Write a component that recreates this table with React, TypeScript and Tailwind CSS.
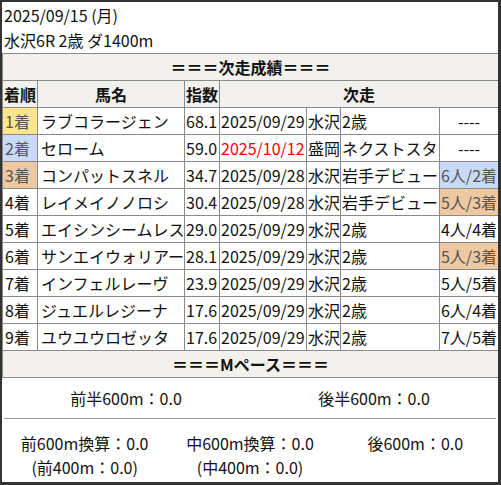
type Row = {
  rank: string;
  rankBg?: string;
  name: string;
  index: string;
  date: string;
  dateRed?: boolean;
  venue: string;
  race: string;
  result: string;
  resultBg?: string;
};

const rows: Row[] = [
  { rank: '1着', rankBg: 'bg-[#fce68d]', name: 'ラブコラージェン', index: '68.1', date: '2025/09/29', venue: '水沢', race: '2歳', result: '----' },
  { rank: '2着', rankBg: 'bg-[#c9daf8]', name: 'セローム', index: '59.0', date: '2025/10/12', dateRed: true, venue: '盛岡', race: 'ネクストスタ', result: '----' },
  { rank: '3着', rankBg: 'bg-[#edc8a0]', name: 'コンパットスネル', index: '34.7', date: '2025/09/28', venue: '水沢', race: '岩手デビュー', result: '6人/2着', resultBg: 'bg-[#c9daf8]' },
  { rank: '4着', name: 'レイメイノノロシ', index: '30.4', date: '2025/09/28', venue: '水沢', race: '岩手デビュー', result: '5人/3着', resultBg: 'bg-[#edc8a0]' },
  { rank: '5着', name: 'エイシンシームレス', index: '29.0', date: '2025/09/29', venue: '水沢', race: '2歳', result: '4人/4着' },
  { rank: '6着', name: 'サンエイウォリアー', index: '28.1', date: '2025/09/29', venue: '水沢', race: '2歳', result: '5人/3着', resultBg: 'bg-[#edc8a0]' },
  { rank: '7着', name: 'インフェルレーヴ', index: '23.9', date: '2025/09/29', venue: '水沢', race: '2歳', result: '5人/5着' },
  { rank: '8着', name: 'ジュエルレジーナ', index: '17.6', date: '2025/09/29', venue: '水沢', race: '2歳', result: '6人/4着' },
  { rank: '9着', name: 'ユウユウロゼッタ', index: '17.6', date: '2025/09/29', venue: '水沢', race: '2歳', result: '7人/5着' },
];

const cell = 'border border-[#8a8a8a] h-[27px] p-0 whitespace-nowrap overflow-hidden';

export default function App() {
  return (
    <div
      className="w-[501px] h-[485px] bg-white text-[16px] leading-[25px] text-[#111] border-l-2 border-t-2 border-r-[3px] border-b-[3px] border-[#333] overflow-hidden"
      style={{ fontFamily: '"Noto Sans CJK JP", "Noto Sans", sans-serif' }}
    >
      {/* Race title */}
      <div className="h-[51px] pl-[2px] pt-[1px]">
        <div>2025/09/15 (月)</div>
        <div>水沢6R 2歳 ダ1400m</div>
      </div>

      {/* Next race results */}
      <table className="w-[496px] table-fixed border-collapse">
        <colgroup>
          <col className="w-[35px]" />
          <col className="w-[147px]" />
          <col className="w-[35px]" />
          <col className="w-[87px]" />
          <col className="w-[34px]" />
          <col className="w-[99px]" />
          <col className="w-[59px]" />
        </colgroup>
        <tbody>
          <tr>
            <td colSpan={7} className={`${cell} bg-[#f2f1ed] text-center font-bold`}>
              ＝＝＝次走成績＝＝＝
            </td>
          </tr>
          <tr className="font-bold bg-[#f2f1ed]">
            <td className={`${cell} pl-[1px]`}>着順</td>
            <td className={`${cell} text-center`}>馬名</td>
            <td className={`${cell} pl-[1px]`}>指数</td>
            <td colSpan={4} className={`${cell} text-center`}>次走</td>
          </tr>
          {rows.map((r) => (
            <tr key={r.rank}>
              <td className={`${cell} pl-[2px] ${r.rankBg ? `${r.rankBg} text-[#555]` : ''}`}>{r.rank}</td>
              <td className={`${cell} pl-[3px]`}>{r.name}</td>
              <td className={`${cell} pl-[1px]`}>{r.index}</td>
              <td className={`${cell} pl-[1px] ${r.dateRed ? 'text-[#ff0000]' : ''}`}>{r.date}</td>
              <td className={`${cell} pl-[1px]`}>{r.venue}</td>
              <td className={`${cell} pl-[1px]`}>{r.race}</td>
              <td className={`${cell} text-center ${r.resultBg ? `${r.resultBg} text-[#555]` : ''}`}>{r.result}</td>
            </tr>
          ))}
          <tr>
            <td colSpan={7} className={`${cell} bg-[#f2f1ed] text-center font-bold`}>
              ＝＝＝Mペース＝＝＝
            </td>
          </tr>
        </tbody>
      </table>

      {/* Pace */}
      <div className="grid grid-cols-2 h-[40px] items-center text-center">
        <div>前半600m：0.0</div>
        <div>後半600m：0.0</div>
      </div>
      <div className="mx-[2px] border-t border-[#999]" />
      <div className="grid grid-cols-3 pt-[12px] text-center leading-[24px]">
        <div>
          <div>前600m換算：0.0</div>
          <div>(前400m：0.0)</div>
        </div>
        <div>
          <div>中600m換算：0.0</div>
          <div>(中400m：0.0)</div>
        </div>
        <div>
          <div>後600m：0.0</div>
        </div>
      </div>
    </div>
  );
}
